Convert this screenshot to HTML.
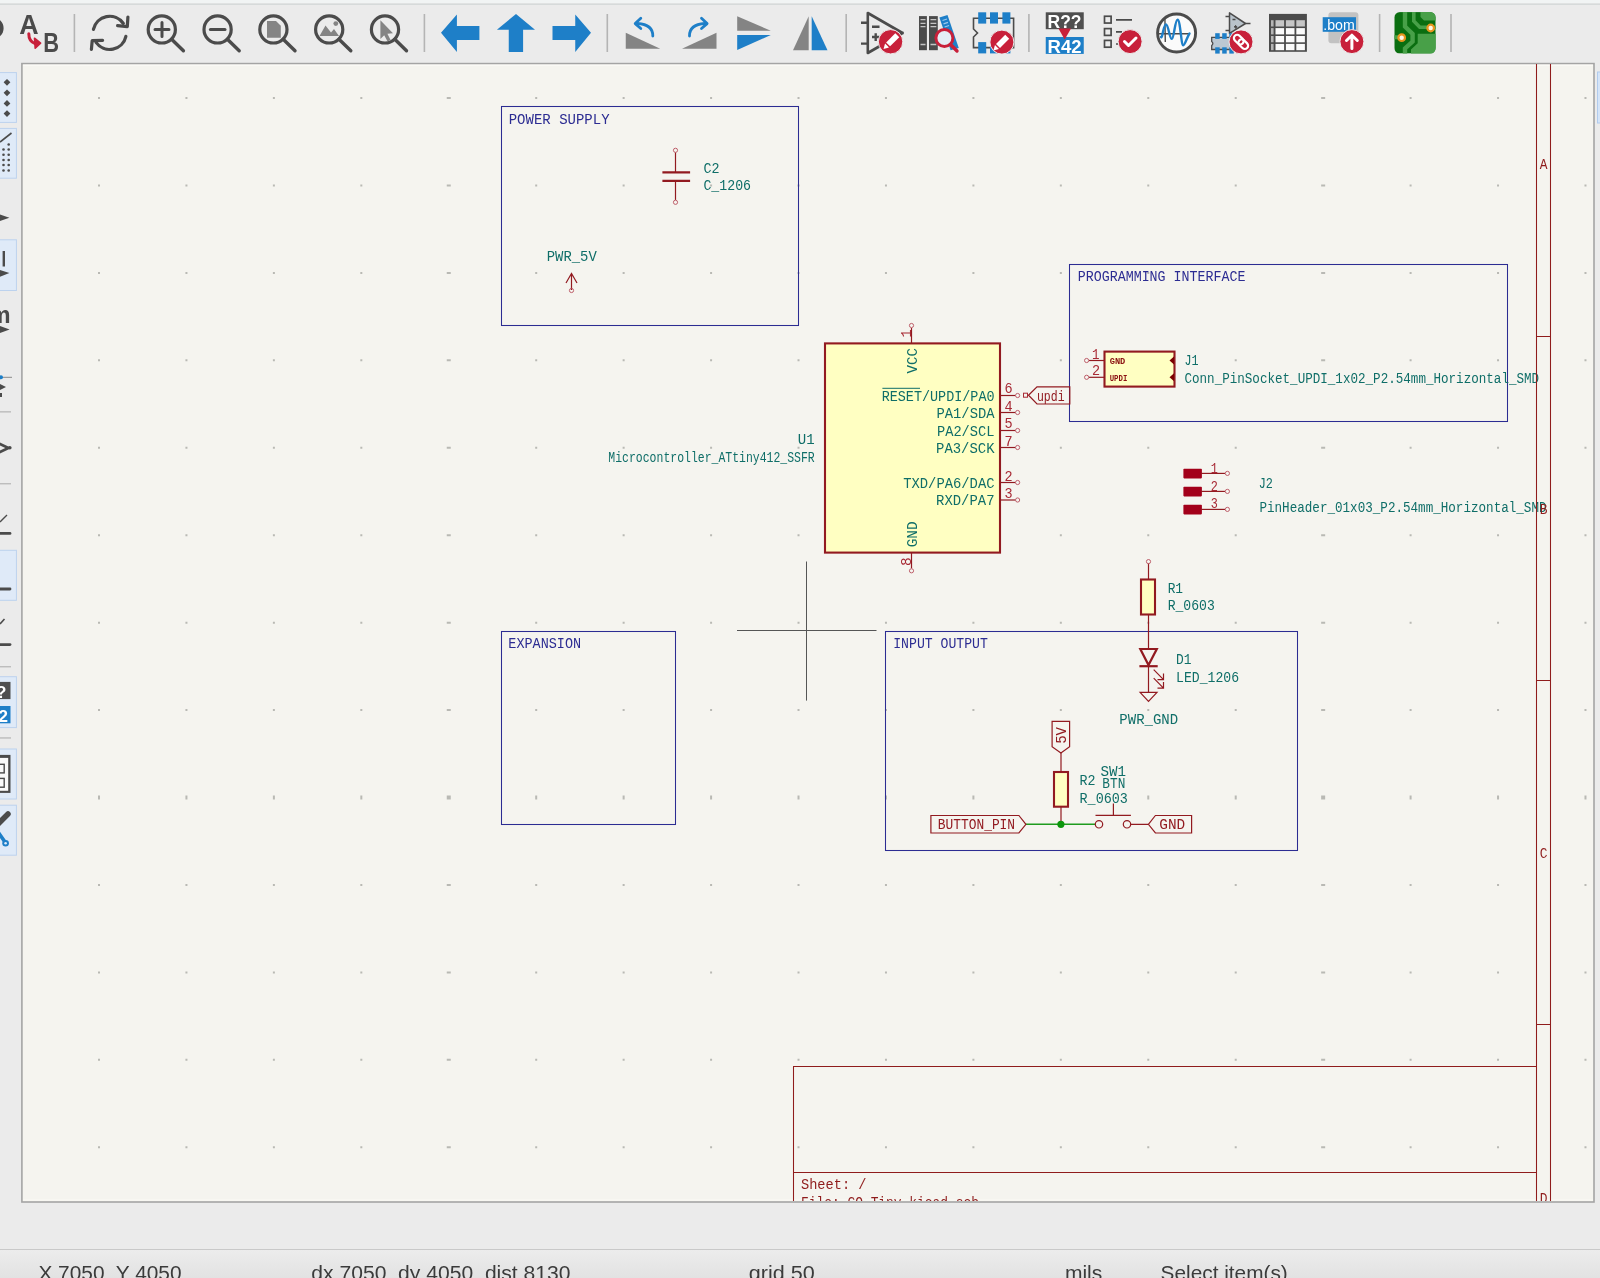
<!DOCTYPE html>
<html><head><meta charset="utf-8"><title>KiCad Schematic</title>
<style>
html,body{margin:0;padding:0;width:1600px;height:1278px;overflow:hidden;background:#ebebeb;}
svg{position:absolute;left:0;top:0;display:block;will-change:transform}
text{font-family:"Liberation Sans", sans-serif;}
.k{font-family:"Liberation Mono", monospace;stroke:none;}

</style></head><body>
<svg width="1600" height="1278" viewBox="0 0 1600 1278">

<rect x="0" y="0" width="1600" height="1278" fill="#ebebeb"/>
<rect x="0" y="0" width="1600" height="3.5" fill="#f1f4f4"/>
<rect x="0" y="3.5" width="1600" height="1.3" fill="#d2d6d6"/>
<rect x="0" y="1249" width="1600" height="1" fill="#c9c9c9"/>
<defs><linearGradient id="sb" x1="0" y1="0" x2="0" y2="1"><stop offset="0" stop-color="#ececec"/><stop offset="1" stop-color="#e2e2e2"/></linearGradient></defs>
<rect x="0" y="1250" width="1600" height="28" fill="url(#sb)"/>
<text x="38.4" y="1280.2" font-size="20.5" fill="#3b3b3b" textLength="143.2" lengthAdjust="spacingAndGlyphs" xml:space="preserve">X 7050  Y 4050</text>
<text x="311.3" y="1280.2" font-size="20.5" fill="#3b3b3b" textLength="259.2" lengthAdjust="spacingAndGlyphs" xml:space="preserve">dx 7050  dy 4050  dist 8130</text>
<text x="748.8" y="1280.2" font-size="20.5" fill="#3b3b3b" textLength="66.0" lengthAdjust="spacingAndGlyphs" xml:space="preserve">grid 50</text>
<text x="1064.9" y="1280.2" font-size="20.5" fill="#3b3b3b" textLength="37.4" lengthAdjust="spacingAndGlyphs" xml:space="preserve">mils</text>
<text x="1160.6" y="1280.2" font-size="20.5" fill="#3b3b3b" textLength="127.2" lengthAdjust="spacingAndGlyphs" xml:space="preserve">Select item(s)</text>
<rect x="21.9" y="63.6" width="1572.1" height="1138.4" fill="#f5f4ef" stroke="#a4a4a4" stroke-width="1.6"/>
<rect x="23" y="64.6" width="1570" height="1" fill="#fdfcf8"/>
<rect x="23" y="1199.5" width="1570" height="1" fill="#fbfaf6"/>
<clipPath id="cv"><rect x="22" y="64" width="1571" height="1137"/></clipPath>
<g clip-path="url(#cv)">
<path d="M98.00 97.00h2v2h-2z M98.00 184.44h2v2h-2z M98.00 271.88h2v2h-2z M98.00 359.32h2v2h-2z M98.00 446.76h2v2h-2z M98.00 534.20h2v2h-2z M98.00 621.64h2v2h-2z M98.00 709.08h2v2h-2z M98.00 795.52h2v4h-2z M98.00 883.96h2v2h-2z M98.00 971.40h2v2h-2z M98.00 1058.84h2v2h-2z M98.00 1146.28h2v2h-2z M185.44 97.00h2v2h-2z M185.44 184.44h2v2h-2z M185.44 271.88h2v2h-2z M185.44 359.32h2v2h-2z M185.44 446.76h2v2h-2z M185.44 534.20h2v2h-2z M185.44 621.64h2v2h-2z M185.44 709.08h2v2h-2z M185.44 795.52h2v4h-2z M185.44 883.96h2v2h-2z M185.44 971.40h2v2h-2z M185.44 1058.84h2v2h-2z M185.44 1146.28h2v2h-2z M272.88 97.00h2v2h-2z M272.88 184.44h2v2h-2z M272.88 271.88h2v2h-2z M272.88 359.32h2v2h-2z M272.88 446.76h2v2h-2z M272.88 534.20h2v2h-2z M272.88 621.64h2v2h-2z M272.88 709.08h2v2h-2z M272.88 795.52h2v4h-2z M272.88 883.96h2v2h-2z M272.88 971.40h2v2h-2z M272.88 1058.84h2v2h-2z M272.88 1146.28h2v2h-2z M360.32 97.00h2v2h-2z M360.32 184.44h2v2h-2z M360.32 271.88h2v2h-2z M360.32 359.32h2v2h-2z M360.32 446.76h2v2h-2z M360.32 534.20h2v2h-2z M360.32 621.64h2v2h-2z M360.32 709.08h2v2h-2z M360.32 795.52h2v4h-2z M360.32 883.96h2v2h-2z M360.32 971.40h2v2h-2z M360.32 1058.84h2v2h-2z M360.32 1146.28h2v2h-2z M446.76 97.00h4v2h-4z M446.76 184.44h4v2h-4z M446.76 271.88h4v2h-4z M446.76 359.32h4v2h-4z M446.76 446.76h4v2h-4z M446.76 534.20h4v2h-4z M446.76 621.64h4v2h-4z M446.76 709.08h4v2h-4z M446.76 795.52h4v4h-4z M446.76 883.96h4v2h-4z M446.76 971.40h4v2h-4z M446.76 1058.84h4v2h-4z M446.76 1146.28h4v2h-4z M535.20 97.00h2v2h-2z M535.20 184.44h2v2h-2z M535.20 271.88h2v2h-2z M535.20 359.32h2v2h-2z M535.20 446.76h2v2h-2z M535.20 534.20h2v2h-2z M535.20 621.64h2v2h-2z M535.20 709.08h2v2h-2z M535.20 795.52h2v4h-2z M535.20 883.96h2v2h-2z M535.20 971.40h2v2h-2z M535.20 1058.84h2v2h-2z M535.20 1146.28h2v2h-2z M622.64 97.00h2v2h-2z M622.64 184.44h2v2h-2z M622.64 271.88h2v2h-2z M622.64 359.32h2v2h-2z M622.64 446.76h2v2h-2z M622.64 534.20h2v2h-2z M622.64 621.64h2v2h-2z M622.64 709.08h2v2h-2z M622.64 795.52h2v4h-2z M622.64 883.96h2v2h-2z M622.64 971.40h2v2h-2z M622.64 1058.84h2v2h-2z M622.64 1146.28h2v2h-2z M710.08 97.00h2v2h-2z M710.08 184.44h2v2h-2z M710.08 271.88h2v2h-2z M710.08 359.32h2v2h-2z M710.08 446.76h2v2h-2z M710.08 534.20h2v2h-2z M710.08 621.64h2v2h-2z M710.08 709.08h2v2h-2z M710.08 795.52h2v4h-2z M710.08 883.96h2v2h-2z M710.08 971.40h2v2h-2z M710.08 1058.84h2v2h-2z M710.08 1146.28h2v2h-2z M797.52 97.00h2v2h-2z M797.52 184.44h2v2h-2z M797.52 271.88h2v2h-2z M797.52 359.32h2v2h-2z M797.52 446.76h2v2h-2z M797.52 534.20h2v2h-2z M797.52 621.64h2v2h-2z M797.52 709.08h2v2h-2z M797.52 795.52h2v4h-2z M797.52 883.96h2v2h-2z M797.52 971.40h2v2h-2z M797.52 1058.84h2v2h-2z M797.52 1146.28h2v2h-2z M884.96 97.00h2v2h-2z M884.96 184.44h2v2h-2z M884.96 271.88h2v2h-2z M884.96 359.32h2v2h-2z M884.96 446.76h2v2h-2z M884.96 534.20h2v2h-2z M884.96 621.64h2v2h-2z M884.96 709.08h2v2h-2z M884.96 795.52h2v4h-2z M884.96 883.96h2v2h-2z M884.96 971.40h2v2h-2z M884.96 1058.84h2v2h-2z M884.96 1146.28h2v2h-2z M972.40 97.00h2v2h-2z M972.40 184.44h2v2h-2z M972.40 271.88h2v2h-2z M972.40 359.32h2v2h-2z M972.40 446.76h2v2h-2z M972.40 534.20h2v2h-2z M972.40 621.64h2v2h-2z M972.40 709.08h2v2h-2z M972.40 795.52h2v4h-2z M972.40 883.96h2v2h-2z M972.40 971.40h2v2h-2z M972.40 1058.84h2v2h-2z M972.40 1146.28h2v2h-2z M1059.84 97.00h2v2h-2z M1059.84 184.44h2v2h-2z M1059.84 271.88h2v2h-2z M1059.84 359.32h2v2h-2z M1059.84 446.76h2v2h-2z M1059.84 534.20h2v2h-2z M1059.84 621.64h2v2h-2z M1059.84 709.08h2v2h-2z M1059.84 795.52h2v4h-2z M1059.84 883.96h2v2h-2z M1059.84 971.40h2v2h-2z M1059.84 1058.84h2v2h-2z M1059.84 1146.28h2v2h-2z M1147.28 97.00h2v2h-2z M1147.28 184.44h2v2h-2z M1147.28 271.88h2v2h-2z M1147.28 359.32h2v2h-2z M1147.28 446.76h2v2h-2z M1147.28 534.20h2v2h-2z M1147.28 621.64h2v2h-2z M1147.28 709.08h2v2h-2z M1147.28 795.52h2v4h-2z M1147.28 883.96h2v2h-2z M1147.28 971.40h2v2h-2z M1147.28 1058.84h2v2h-2z M1147.28 1146.28h2v2h-2z M1234.72 97.00h2v2h-2z M1234.72 184.44h2v2h-2z M1234.72 271.88h2v2h-2z M1234.72 359.32h2v2h-2z M1234.72 446.76h2v2h-2z M1234.72 534.20h2v2h-2z M1234.72 621.64h2v2h-2z M1234.72 709.08h2v2h-2z M1234.72 795.52h2v4h-2z M1234.72 883.96h2v2h-2z M1234.72 971.40h2v2h-2z M1234.72 1058.84h2v2h-2z M1234.72 1146.28h2v2h-2z M1321.16 97.00h4v2h-4z M1321.16 184.44h4v2h-4z M1321.16 271.88h4v2h-4z M1321.16 359.32h4v2h-4z M1321.16 446.76h4v2h-4z M1321.16 534.20h4v2h-4z M1321.16 621.64h4v2h-4z M1321.16 709.08h4v2h-4z M1321.16 795.52h4v4h-4z M1321.16 883.96h4v2h-4z M1321.16 971.40h4v2h-4z M1321.16 1058.84h4v2h-4z M1321.16 1146.28h4v2h-4z M1409.60 97.00h2v2h-2z M1409.60 184.44h2v2h-2z M1409.60 271.88h2v2h-2z M1409.60 359.32h2v2h-2z M1409.60 446.76h2v2h-2z M1409.60 534.20h2v2h-2z M1409.60 621.64h2v2h-2z M1409.60 709.08h2v2h-2z M1409.60 795.52h2v4h-2z M1409.60 883.96h2v2h-2z M1409.60 971.40h2v2h-2z M1409.60 1058.84h2v2h-2z M1409.60 1146.28h2v2h-2z M1497.04 97.00h2v2h-2z M1497.04 184.44h2v2h-2z M1497.04 271.88h2v2h-2z M1497.04 359.32h2v2h-2z M1497.04 446.76h2v2h-2z M1497.04 534.20h2v2h-2z M1497.04 621.64h2v2h-2z M1497.04 709.08h2v2h-2z M1497.04 795.52h2v4h-2z M1497.04 883.96h2v2h-2z M1497.04 971.40h2v2h-2z M1497.04 1058.84h2v2h-2z M1497.04 1146.28h2v2h-2z M1584.48 97.00h2v2h-2z M1584.48 184.44h2v2h-2z M1584.48 271.88h2v2h-2z M1584.48 359.32h2v2h-2z M1584.48 446.76h2v2h-2z M1584.48 534.20h2v2h-2z M1584.48 621.64h2v2h-2z M1584.48 709.08h2v2h-2z M1584.48 795.52h2v4h-2z M1584.48 883.96h2v2h-2z M1584.48 971.40h2v2h-2z M1584.48 1058.84h2v2h-2z M1584.48 1146.28h2v2h-2z" fill="#b9b9b4"/>
<rect x="501.5" y="106.5" width="297.0" height="219.0" fill="none" stroke="#2c2c92" stroke-width="1.05"/>
<text class="k" x="508.72" y="123.50" font-size="14.4" fill="#2c2c92" textLength="100.85" lengthAdjust="spacingAndGlyphs" >POWER SUPPLY</text>
<rect x="1069.5" y="264.5" width="438.0" height="157.0" fill="none" stroke="#2c2c92" stroke-width="1.05"/>
<text class="k" x="1077.82" y="280.50" font-size="14.4" fill="#2c2c92" textLength="167.55" lengthAdjust="spacingAndGlyphs" >PROGRAMMING INTERFACE</text>
<rect x="501.5" y="631.5" width="174.0" height="193.0" fill="none" stroke="#2c2c92" stroke-width="1.05"/>
<text class="k" x="508.32" y="648.20" font-size="14.4" fill="#2c2c92" textLength="72.75" lengthAdjust="spacingAndGlyphs" >EXPANSION</text>
<rect x="885.5" y="631.5" width="412.0" height="219.0" fill="none" stroke="#2c2c92" stroke-width="1.05"/>
<text class="k" x="893.22" y="648.20" font-size="14.4" fill="#2c2c92" textLength="94.65" lengthAdjust="spacingAndGlyphs" >INPUT OUTPUT</text>
<path d="M737 630.5H876.5M806.5 561.5V700.6" stroke="#555" stroke-width="1" fill="none"/>
<path d="M675.5 152.5V172.3M675.5 180.9V200" stroke="#921a20" stroke-width="1.2" fill="none"/>
<path d="M662.4 172.3H690.1M662.4 180.9H690.1" stroke="#921a20" stroke-width="2.2" fill="none"/>
<circle cx="675.5" cy="150.3" r="2.1" fill="none" stroke="#b8505e" stroke-width="0.9"/>
<circle cx="675.5" cy="202.3" r="2.1" fill="none" stroke="#b8505e" stroke-width="0.9"/>
<text class="k" x="703.45" y="173.20" font-size="13.8" fill="#0f6e68" textLength="16.10" lengthAdjust="spacingAndGlyphs" >C2</text>
<text class="k" x="703.45" y="190.10" font-size="13.8" fill="#0f6e68" textLength="47.60" lengthAdjust="spacingAndGlyphs" >C_1206</text>
<text class="k" x="546.75" y="260.80" font-size="13.8" fill="#0f6e68" textLength="50.00" lengthAdjust="spacingAndGlyphs" >PWR_5V</text>
<path d="M571.5 290V273.5M566 283L571.5 273.5L577 283" stroke="#921a20" stroke-width="1.2" fill="none"/>
<circle cx="571.5" cy="290.5" r="2.1" fill="none" stroke="#b8505e" stroke-width="0.9"/>
<rect x="825" y="343.4" width="175" height="209.2" fill="#ffffc2" stroke="#921a20" stroke-width="2.1"/>
<path d="M911.5 328V343" stroke="#921a20" stroke-width="1.2"/>
<circle cx="911.5" cy="325.5" r="2.1" fill="none" stroke="#b8505e" stroke-width="0.9"/>
<path d="M911.5 553V568.3" stroke="#921a20" stroke-width="1.2"/>
<circle cx="911.5" cy="570.8" r="2.1" fill="none" stroke="#b8505e" stroke-width="0.9"/>
<text class="k" x="0" y="0" font-size="13.8" fill="#a82a35" textLength="8.10" lengthAdjust="spacingAndGlyphs" transform="translate(911.20 337.55) rotate(-90)">1</text>
<text class="k ky" x="0" y="0" font-size="13.8" fill="#0f6e68" textLength="25.40" lengthAdjust="spacingAndGlyphs" transform="translate(917.00 373.55) rotate(-90)">VCC</text>
<text class="k ky" x="0" y="0" font-size="13.8" fill="#0f6e68" textLength="25.90" lengthAdjust="spacingAndGlyphs" transform="translate(917.00 547.35) rotate(-90)">GND</text>
<text class="k" x="0" y="0" font-size="13.8" fill="#a82a35" textLength="8.70" lengthAdjust="spacingAndGlyphs" transform="translate(911.20 565.95) rotate(-90)">8</text>
<path d="M1000 395.5H1015.3" stroke="#921a20" stroke-width="1.2"/>
<circle cx="1017.6" cy="395.5" r="2.1" fill="none" stroke="#b8505e" stroke-width="0.9"/>
<text class="k ky" x="881.65" y="400.50" font-size="13.8" fill="#0f6e68" textLength="112.90" lengthAdjust="spacingAndGlyphs" >RESET/UPDI/PA0</text>
<text class="k" x="1004.45" y="393.20" font-size="13.8" fill="#a82a35" textLength="8.10" lengthAdjust="spacingAndGlyphs" >6</text>
<path d="M1000 412.5H1015.3" stroke="#921a20" stroke-width="1.2"/>
<circle cx="1017.6" cy="412.5" r="2.1" fill="none" stroke="#b8505e" stroke-width="0.9"/>
<text class="k ky" x="936.45" y="418.00" font-size="13.8" fill="#0f6e68" textLength="58.10" lengthAdjust="spacingAndGlyphs" >PA1/SDA</text>
<text class="k" x="1004.45" y="410.70" font-size="13.8" fill="#a82a35" textLength="8.10" lengthAdjust="spacingAndGlyphs" >4</text>
<path d="M1000 430.5H1015.3" stroke="#921a20" stroke-width="1.2"/>
<circle cx="1017.6" cy="430.5" r="2.1" fill="none" stroke="#b8505e" stroke-width="0.9"/>
<text class="k ky" x="936.95" y="435.50" font-size="13.8" fill="#0f6e68" textLength="57.60" lengthAdjust="spacingAndGlyphs" >PA2/SCL</text>
<text class="k" x="1004.45" y="428.20" font-size="13.8" fill="#a82a35" textLength="8.10" lengthAdjust="spacingAndGlyphs" >5</text>
<path d="M1000 447.5H1015.3" stroke="#921a20" stroke-width="1.2"/>
<circle cx="1017.6" cy="447.5" r="2.1" fill="none" stroke="#b8505e" stroke-width="0.9"/>
<text class="k ky" x="936.05" y="453.00" font-size="13.8" fill="#0f6e68" textLength="58.50" lengthAdjust="spacingAndGlyphs" >PA3/SCK</text>
<text class="k" x="1004.45" y="445.70" font-size="13.8" fill="#a82a35" textLength="8.10" lengthAdjust="spacingAndGlyphs" >7</text>
<path d="M1000 482.5H1015.3" stroke="#921a20" stroke-width="1.2"/>
<circle cx="1017.6" cy="482.5" r="2.1" fill="none" stroke="#b8505e" stroke-width="0.9"/>
<text class="k ky" x="903.15" y="487.80" font-size="13.8" fill="#0f6e68" textLength="91.40" lengthAdjust="spacingAndGlyphs" >TXD/PA6/DAC</text>
<text class="k" x="1004.45" y="480.50" font-size="13.8" fill="#a82a35" textLength="8.10" lengthAdjust="spacingAndGlyphs" >2</text>
<path d="M1000 500.0H1015.3" stroke="#921a20" stroke-width="1.2"/>
<circle cx="1017.6" cy="500.0" r="2.1" fill="none" stroke="#b8505e" stroke-width="0.9"/>
<text class="k ky" x="936.05" y="505.30" font-size="13.8" fill="#0f6e68" textLength="58.50" lengthAdjust="spacingAndGlyphs" >RXD/PA7</text>
<text class="k" x="1004.45" y="498.00" font-size="13.8" fill="#a82a35" textLength="8.10" lengthAdjust="spacingAndGlyphs" >3</text>
<path d="M882.4 388.3H920" stroke="#0f6e68" stroke-width="1"/>
<text class="k" x="797.85" y="444.30" font-size="13.8" fill="#0f6e68" textLength="16.90" lengthAdjust="spacingAndGlyphs" >U1</text>
<text class="k" x="608.35" y="461.60" font-size="13.8" fill="#0f6e68" textLength="206.40" lengthAdjust="spacingAndGlyphs" >Microcontroller_ATtiny412_SSFR</text>
<path d="M1028.5 395.2L1037 386.8H1069.8V404H1037Z" fill="none" stroke="#921a20" stroke-width="1.2"/>
<rect x="1023.5" y="393.2" width="4" height="4" fill="none" stroke="#a82a35" stroke-width="1"/>
<text class="k" x="1036.95" y="401.10" font-size="13.8" fill="#921a20" textLength="27.60" lengthAdjust="spacingAndGlyphs" >updi</text>
<rect x="1104.5" y="351.6" width="70" height="35" fill="#ffffc2" stroke="#921a20" stroke-width="2.1"/>
<path d="M1089 360.5H1104" stroke="#921a20" stroke-width="1.2"/>
<circle cx="1086.6" cy="360.5" r="2.1" fill="none" stroke="#b8505e" stroke-width="0.9"/>
<path d="M1174 356.5L1169.5 360.5L1174 364.5Z" fill="#7a0000"/>
<path d="M1089 377.3H1104" stroke="#921a20" stroke-width="1.2"/>
<circle cx="1086.6" cy="377.3" r="2.1" fill="none" stroke="#b8505e" stroke-width="0.9"/>
<path d="M1174 373.3L1169.5 377.3L1174 381.3Z" fill="#7a0000"/>
<text class="k" x="1092.05" y="358.60" font-size="13.8" fill="#a82a35" textLength="7.50" lengthAdjust="spacingAndGlyphs" >1</text>
<text class="k" x="1092.05" y="375.10" font-size="13.8" fill="#a82a35" textLength="8.10" lengthAdjust="spacingAndGlyphs" >2</text>
<text class="k" x="1109.66" y="364.40" font-size="8.5" fill="#8a1010" textLength="15.68" lengthAdjust="spacingAndGlyphs" font-weight="bold">GND</text>
<text class="k" x="1109.66" y="381.20" font-size="8.5" fill="#8a1010" textLength="17.68" lengthAdjust="spacingAndGlyphs" font-weight="bold">UPDI</text>
<text class="k" x="1184.45" y="365.30" font-size="13.8" fill="#0f6e68" textLength="14.10" lengthAdjust="spacingAndGlyphs" >J1</text>
<text class="k" x="1184.45" y="383.30" font-size="13.8" fill="#0f6e68" textLength="354.70" lengthAdjust="spacingAndGlyphs" >Conn_PinSocket_UPDI_1x02_P2.54mm_Horizontal_SMD</text>
<rect x="1183.4" y="468.79999999999995" width="18.5" height="9.6" rx="0.8" fill="#a3001a"/>
<path d="M1201 473.4H1225" stroke="#921a20" stroke-width="1.2"/>
<circle cx="1227.4" cy="473.4" r="2.1" fill="none" stroke="#b8505e" stroke-width="0.9"/>
<text class="k" x="1210.65" y="473.20" font-size="13.8" fill="#a82a35" textLength="7.10" lengthAdjust="spacingAndGlyphs" >1</text>
<rect x="1183.4" y="486.79999999999995" width="18.5" height="9.6" rx="0.8" fill="#a3001a"/>
<path d="M1201 491.4H1225" stroke="#921a20" stroke-width="1.2"/>
<circle cx="1227.4" cy="491.4" r="2.1" fill="none" stroke="#b8505e" stroke-width="0.9"/>
<text class="k" x="1210.65" y="490.60" font-size="13.8" fill="#a82a35" textLength="7.10" lengthAdjust="spacingAndGlyphs" >2</text>
<rect x="1183.4" y="504.79999999999995" width="18.5" height="9.6" rx="0.8" fill="#a3001a"/>
<path d="M1201 509.4H1225" stroke="#921a20" stroke-width="1.2"/>
<circle cx="1227.4" cy="509.4" r="2.1" fill="none" stroke="#b8505e" stroke-width="0.9"/>
<text class="k" x="1210.65" y="507.60" font-size="13.8" fill="#a82a35" textLength="7.10" lengthAdjust="spacingAndGlyphs" >3</text>
<text class="k" x="1258.75" y="487.90" font-size="13.8" fill="#0f6e68" textLength="14.20" lengthAdjust="spacingAndGlyphs" >J2</text>
<text class="k" x="1259.45" y="512.20" font-size="13.8" fill="#0f6e68" textLength="287.10" lengthAdjust="spacingAndGlyphs" >PinHeader_01x03_P2.54mm_Horizontal_SMD</text>
<path d="M1148.5 563.5V579.3M1148.5 614.5V649M1148.5 666V692.3" stroke="#921a20" stroke-width="1.2" fill="none"/>
<circle cx="1148.5" cy="561.6" r="2.1" fill="none" stroke="#b8505e" stroke-width="0.9"/>
<rect x="1141" y="579.5" width="14" height="35" fill="#ffffc2" stroke="#921a20" stroke-width="2.1"/>
<path d="M1140.3 649H1156.8L1148.5 665Z" fill="none" stroke="#921a20" stroke-width="2.2" stroke-linejoin="miter"/>
<path d="M1139.4 666.2H1157.7" stroke="#921a20" stroke-width="2.2"/>
<path d="M1153.7 669.7L1163.5 679.6M1163.5 673.5V679.6H1157.5M1153.7 678.2L1163.5 688.2M1163.5 682V688.2H1157.5" stroke="#921a20" stroke-width="1.2" fill="none"/>
<path d="M1140.1 692.3H1157L1148.5 701.4Z" fill="none" stroke="#921a20" stroke-width="1.2"/>
<text class="k" x="1167.65" y="592.60" font-size="13.8" fill="#0f6e68" textLength="15.40" lengthAdjust="spacingAndGlyphs" >R1</text>
<text class="k" x="1167.65" y="609.80" font-size="13.8" fill="#0f6e68" textLength="47.10" lengthAdjust="spacingAndGlyphs" >R_0603</text>
<text class="k" x="1176.05" y="664.40" font-size="13.8" fill="#0f6e68" textLength="15.50" lengthAdjust="spacingAndGlyphs" >D1</text>
<text class="k" x="1176.05" y="682.30" font-size="13.8" fill="#0f6e68" textLength="63.00" lengthAdjust="spacingAndGlyphs" >LED_1206</text>
<text class="k" x="1119.35" y="723.80" font-size="13.8" fill="#0f6e68" textLength="58.80" lengthAdjust="spacingAndGlyphs" >PWR_GND</text>
<path d="M1052.1 721.4H1069.6V746.8L1060.9 752.9L1052.1 746.8Z" fill="none" stroke="#921a20" stroke-width="1.2"/>
<text class="k" x="0" y="0" font-size="13.8" fill="#921a20" textLength="16.90" lengthAdjust="spacingAndGlyphs" transform="translate(1066.00 743.85) rotate(-90)">5V</text>
<path d="M1061 753V771.6M1061 806.6V824" stroke="#921a20" stroke-width="1.2" fill="none"/>
<rect x="1054" y="772" width="14" height="34.7" fill="#ffffc2" stroke="#921a20" stroke-width="2.1"/>
<path d="M1025.9 824.3H1095.2" stroke="#1f9b1f" stroke-width="1.4"/>
<circle cx="1060.9" cy="824.3" r="3.6" fill="#0c960c"/>
<path d="M930.9 815.5H1018.9L1025.9 824.3L1018.9 833H930.9Z" fill="none" stroke="#921a20" stroke-width="1.2"/>
<text class="k" x="937.85" y="829.30" font-size="13.8" fill="#921a20" textLength="77.20" lengthAdjust="spacingAndGlyphs" >BUTTON_PIN</text>
<circle cx="1099" cy="824.3" r="3.7" fill="none" stroke="#921a20" stroke-width="1.2"/>
<circle cx="1127" cy="824.3" r="3.7" fill="none" stroke="#921a20" stroke-width="1.2"/>
<path d="M1095.5 815.4H1130.9M1113.4 803.6V815.4M1130.8 824.3H1148.4" stroke="#921a20" stroke-width="1.2" fill="none"/>
<path d="M1148.4 824.3L1155.4 815.5H1191.6V833H1155.4Z" fill="none" stroke="#921a20" stroke-width="1.2"/>
<text class="k" x="1159.25" y="829.30" font-size="13.8" fill="#921a20" textLength="25.90" lengthAdjust="spacingAndGlyphs" >GND</text>
<text class="k" x="1100.55" y="775.70" font-size="13.8" fill="#0f6e68" textLength="25.60" lengthAdjust="spacingAndGlyphs" >SW1</text>
<text class="k" x="1102.35" y="788.00" font-size="13.8" fill="#0f6e68" textLength="23.00" lengthAdjust="spacingAndGlyphs" >BTN</text>
<text class="k" x="1079.55" y="785.00" font-size="13.8" fill="#0f6e68" textLength="16.00" lengthAdjust="spacingAndGlyphs" >R2</text>
<text class="k" x="1079.55" y="802.50" font-size="13.8" fill="#0f6e68" textLength="48.40" lengthAdjust="spacingAndGlyphs" >R_0603</text>
<path d="M1536.5 63V1202M1550.5 63V1202M1536.5 336.5H1550.5M1536.5 680.5H1550.5M1536.5 1024.5H1550.5M793.5 1202V1066.5H1536.5M793.5 1172.5H1536.5" stroke="#8f1c1c" stroke-width="1.05" fill="none"/>
<text class="k" x="1539.82" y="169.10" font-size="14.4" fill="#8f1c1c" textLength="7.75" lengthAdjust="spacingAndGlyphs" >A</text>
<text class="k" x="1539.82" y="513.60" font-size="14.4" fill="#8f1c1c" textLength="7.75" lengthAdjust="spacingAndGlyphs" >B</text>
<text class="k" x="1539.82" y="858.10" font-size="14.4" fill="#8f1c1c" textLength="7.75" lengthAdjust="spacingAndGlyphs" >C</text>
<text class="k" x="1539.82" y="1202.60" font-size="14.4" fill="#8f1c1c" textLength="7.75" lengthAdjust="spacingAndGlyphs" >D</text>
<text class="k" x="800.95" y="1189.20" font-size="13.8" fill="#8f1c1c" textLength="65.60" lengthAdjust="spacingAndGlyphs" >Sheet: /</text>
<text class="k" x="800.95" y="1206.90" font-size="13.8" fill="#8f1c1c" textLength="178.10" lengthAdjust="spacingAndGlyphs" >File: CO_Tiny.kicad_sch</text>
</g>
<rect x="73.6" y="14" width="1.6" height="38" fill="#b4b4b4"/>
<rect x="423.6" y="14" width="1.6" height="38" fill="#b4b4b4"/>
<rect x="606.5" y="14" width="1.6" height="38" fill="#b4b4b4"/>
<rect x="845.4" y="14" width="1.6" height="38" fill="#b4b4b4"/>
<rect x="1028.1" y="14" width="1.6" height="38" fill="#b4b4b4"/>
<rect x="1378.8" y="14" width="1.6" height="38" fill="#b4b4b4"/>
<rect x="1450.2" y="14" width="1.6" height="38" fill="#b4b4b4"/>
<path d="M-7.2 19.2A9 9 0 0 1 -7.2 37.2" stroke="#4b4b4b" stroke-width="3.6" fill="none"/>
<text x="19.3" y="34" font-size="27" font-weight="bold" fill="#4b4b4b" textLength="19.4" lengthAdjust="spacingAndGlyphs">A</text>
<text x="43.3" y="52" font-size="27" font-weight="bold" fill="#4b4b4b" textLength="15.8" lengthAdjust="spacingAndGlyphs">B</text>
<path d="M28.8 33.8Q28.8 41.5 35 43.5" stroke="#c8203a" stroke-width="3" fill="none" stroke-linecap="round"/>
<path d="M34.5 38.2L40.6 43.2L35.2 48.2Z" fill="#c8203a" stroke="#c8203a" stroke-width="1.6" stroke-linejoin="round"/>
<path d="M93.41 29.45A16.6 16.6 0 0 1 123.33 23.5" stroke="#4b4b4b" stroke-width="3.2" fill="none" stroke-linecap="round"/>
<path d="M117.6 25.6L127.3 26.6L127.9 17" stroke="#4b4b4b" stroke-width="3.2" fill="none" stroke-linecap="round" stroke-linejoin="round"/>
<path d="M125.9 36.35A16.6 16.6 0 0 1 96.05 42.4" stroke="#4b4b4b" stroke-width="3.2" fill="none" stroke-linecap="round"/>
<path d="M102.6 40.4L92.2 40.6L91.4 49.4" stroke="#4b4b4b" stroke-width="3.2" fill="none" stroke-linecap="round" stroke-linejoin="round"/>
<circle cx="161.8" cy="29.4" r="13.6" stroke="#4b4b4b" stroke-width="3.2" fill="none"/>
<path d="M171.6 39.2L183.4 50.7" stroke="#4b4b4b" stroke-width="3.4" stroke-linecap="round"/>
<path d="M155 29.6H169M162 22.6V36.4" stroke="#4b4b4b" stroke-width="3" stroke-linecap="round"/>
<circle cx="217.6" cy="29.4" r="13.6" stroke="#4b4b4b" stroke-width="3.2" fill="none"/>
<path d="M227.4 39.2L239.2 50.7" stroke="#4b4b4b" stroke-width="3.4" stroke-linecap="round"/>
<path d="M210.4 29.6H225" stroke="#4b4b4b" stroke-width="3" stroke-linecap="round"/>
<circle cx="273.4" cy="29.4" r="13.6" stroke="#4b4b4b" stroke-width="3.2" fill="none"/>
<path d="M283.2 39.2L295.0 50.7" stroke="#4b4b4b" stroke-width="3.4" stroke-linecap="round"/>
<path d="M267 21H276L280.8 25.8V37.7H267Z" fill="#848484"/>
<circle cx="329.2" cy="29.4" r="13.6" stroke="#4b4b4b" stroke-width="3.2" fill="none"/>
<path d="M339.0 39.2L350.8 50.7" stroke="#4b4b4b" stroke-width="3.4" stroke-linecap="round"/>
<path d="M319.5 36L325.5 25.5L331 32.5L334 29L339 36Z" fill="#848484"/><circle cx="335.8" cy="23.6" r="2.4" fill="#848484"/>
<circle cx="385" cy="29.4" r="13.6" stroke="#4b4b4b" stroke-width="3.2" fill="none"/>
<path d="M394.8 39.2L406.5 50.7" stroke="#4b4b4b" stroke-width="3.4" stroke-linecap="round"/>
<path d="M380.4 20.2V39L384.2 35.2L387.6 41.5L390.6 40L387.4 33.8L393 33.2Z" fill="#848484"/>
<path d="M441 32.75L456.9 14.4V26H479.4V40H456.9V51.9Z" fill="#1e7fc8"/>
<path d="M516 14L535 29.75H523.1V51.9H508.75V29.75H496.9Z" fill="#1e7fc8"/>
<path d="M591 32.75L575.25 14.4V26H552.5V40H575.25V51.9Z" fill="#1e7fc8"/>
<path d="M625.75 32.75V48.8H660.25Z" fill="#848484"/>
<path d="M652.8 36Q653 24.5 637.5 23.5" stroke="#1e7fc8" stroke-width="2.8" fill="none" stroke-linecap="round"/>
<path d="M640.8 18.3L635.2 23.6L640.8 28.5" stroke="#1e7fc8" stroke-width="2.8" fill="none" stroke-linecap="round" stroke-linejoin="round"/>
<path d="M682 48.8H716.5V32.75Z" fill="#848484"/>
<path d="M689.5 36Q689.3 24.5 704.8 23.5" stroke="#1e7fc8" stroke-width="2.8" fill="none" stroke-linecap="round"/>
<path d="M701.5 18.3L707.1 23.6L701.5 28.5" stroke="#1e7fc8" stroke-width="2.8" fill="none" stroke-linecap="round" stroke-linejoin="round"/>
<path d="M737.2 16.25V30.8H770.8Z" fill="#848484"/><path d="M737.2 35H770.8L737.2 50Z" fill="#1e7fc8"/>
<path d="M808.7 16.25V50.3H793Z" fill="#848484"/><path d="M811.7 16.25V50.3H827.5Z" fill="#1e7fc8"/>
<path d="M867.8 13V53L902.5 33Z" stroke="#4b4b4b" stroke-width="2.6" fill="none" stroke-linejoin="round"/>
<path d="M861 22.7H868M861 43.6H868M902.5 33H903.5M872 26.75H879.5M872 37H879.5M875.7 33.2V41" stroke="#4b4b4b" stroke-width="2.4" fill="none"/>
<circle cx="890.6" cy="41.75" r="12.2" fill="#c8203a" stroke="#ececec" stroke-width="1"/>
<g transform="rotate(-45 892 40.5)"><rect x="886.5" y="37.7" width="13" height="5.6" fill="#fff"/><path d="M885.0 37.7L880.0 40.5L885.0 43.3Z" fill="#fff"/></g>
<rect x="919" y="16.1" width="7.9" height="34.1" fill="#4b4b4b"/><rect x="929" y="16.1" width="8.8" height="34.1" fill="#4b4b4b"/>
<path d="M920.5 19.6H925.5M920.5 23.3H925.5M920.5 26.6H925.5M930.5 19.6H936.3M930.5 23.3H936.3M930.5 26.6H936.3M920.5 44.5H925.5M930.5 44.5H936.3" stroke="#c4c4c4" stroke-width="1.3"/>
<path d="M939.4 17.4L947.5 14.9L958.75 48L950.6 50.2Z" fill="#1e7fc8"/>
<path d="M942.5 20.5L947 19M943.5 23.8L948 22.3M944.6 27L949.1 25.5" stroke="#9cc8ec" stroke-width="1.3"/>
<circle cx="944.4" cy="38" r="8.5" fill="#e4eef5" stroke="#c8203a" stroke-width="3"/>
<path d="M950.5 44.5L957 51" stroke="#c8203a" stroke-width="3.4" stroke-linecap="round"/>
<path d="M973.5 18.2H1013.6V47.6H973.5V37L977.5 33L973.5 29Z" stroke="#4b4b4b" stroke-width="1.6" fill="none"/>
<rect x="978.2" y="12.3" width="8" height="11.3" fill="#1e7fc8"/>
<rect x="978.2" y="42.1" width="8" height="11.3" fill="#1e7fc8"/>
<rect x="990" y="12.3" width="8" height="11.3" fill="#1e7fc8"/>
<rect x="990" y="42.1" width="8" height="11.3" fill="#1e7fc8"/>
<rect x="1002.4" y="12.3" width="8" height="11.3" fill="#1e7fc8"/>
<rect x="1002.4" y="42.1" width="8" height="11.3" fill="#1e7fc8"/>
<circle cx="1001.9" cy="42.1" r="12" fill="#c8203a" stroke="#ececec" stroke-width="1"/>
<g transform="rotate(-45 1001.9 42.1)"><rect x="996.4" y="39.3" width="13" height="5.6" fill="#fff"/><path d="M994.9 39.3L989.9 42.1L994.9 44.9Z" fill="#fff"/></g>
<rect x="1045.75" y="12.3" width="38" height="16.9" fill="#4f4f4f"/>
<text x="1047.5" y="27.8" font-size="18" font-weight="bold" fill="#fff" textLength="34" lengthAdjust="spacingAndGlyphs">R??</text>
<rect x="1045.75" y="37" width="38" height="16.9" fill="#1e7fc8"/>
<text x="1047.5" y="52.5" font-size="18" font-weight="bold" fill="#fff" textLength="34" lengthAdjust="spacingAndGlyphs">R42</text>
<path d="M1058.5 28.5H1071L1064.7 39.5Z" fill="#c8203a"/>
<rect x="1104.5" y="16.25" width="6.6" height="6.8" fill="none" stroke="#4b4b4b" stroke-width="1.7"/>
<rect x="1104.5" y="28.6" width="6.6" height="6.8" fill="none" stroke="#4b4b4b" stroke-width="1.7"/>
<rect x="1104.5" y="40.4" width="6.6" height="6.8" fill="none" stroke="#4b4b4b" stroke-width="1.7"/>
<path d="M1116 19.8H1132M1116 31.8H1122M1116 44H1119" stroke="#4b4b4b" stroke-width="1.7"/>
<circle cx="1130.1" cy="41.6" r="12" fill="#c8203a" stroke="#ececec" stroke-width="1"/>
<path d="M1124.5 41.5L1128.5 45.5L1136 38" stroke="#fff" stroke-width="3" fill="none" stroke-linecap="round" stroke-linejoin="round"/>
<circle cx="1176.6" cy="33" r="19" stroke="#4b4b4b" stroke-width="2.9" fill="#fbfbfb"/>
<path d="M1157.8 33.8H1189.5M1164.9 17.4L1165.3 42" stroke="#4b4b4b" stroke-width="1.4"/>
<path d="M1161 37C1162.5 39 1163.5 24 1166 24.4C1168.5 24.8 1169.5 38.9 1171.8 38.9C1174 38.9 1175 19.7 1177.5 19.7C1180.5 19.7 1181 45.2 1183.3 45.2C1185 45.2 1187 37 1189.5 33.5" stroke="#1e7fc8" stroke-width="2.4" fill="none" stroke-linecap="round"/>
<path d="M1229.5 12.9V33.4L1245.5 23.5Z" fill="#b9c3cb" stroke="#4b4b4b" stroke-width="1.5" stroke-linejoin="round"/>
<path d="M1225.5 16.4H1229.5M1225.5 30.5H1229.5M1245.5 23.5H1250.5M1232.5 19.5H1235.5" stroke="#4b4b4b" stroke-width="1.5"/>
<path d="M1234.2 26.8L1235.6 25.4L1237 26.8L1235.6 28.2Z" fill="#4b4b4b" stroke="#4b4b4b" stroke-width="1"/>
<path d="M1211.7 37.4H1232V49.5H1211.7V45.5Q1214 43.5 1211.7 41.5Z" fill="#bcc8d2" stroke="#4b4b4b" stroke-width="1.3"/>
<rect x="1215.2" y="33.2" width="4.5" height="5.7" fill="#1e7fc8"/><rect x="1215.2" y="47.3" width="4.5" height="6.3" fill="#1e7fc8"/>
<rect x="1222.2" y="33.2" width="4.5" height="5.7" fill="#1e7fc8"/><rect x="1222.2" y="47.3" width="4.5" height="6.3" fill="#1e7fc8"/>
<rect x="1229.3" y="33.2" width="4.5" height="5.7" fill="#1e7fc8"/><rect x="1229.3" y="47.3" width="4.5" height="6.3" fill="#1e7fc8"/>
<circle cx="1241" cy="41.9" r="12" fill="#c8203a" stroke="#ececec" stroke-width="1"/>
<g transform="rotate(45 1241 41.9)"><rect x="1232.3" y="38.6" width="11" height="6.6" rx="3.3" fill="none" stroke="#fff" stroke-width="2.2"/><rect x="1238.7" y="38.6" width="11" height="6.6" rx="3.3" fill="none" stroke="#fff" stroke-width="2.2"/></g>
<rect x="1269" y="13.9" width="37.9" height="37.9" fill="#4b4b4b"/>
<rect x="1275.5" y="20.2" width="8.6" height="6.3" fill="#c6c6c6"/>
<rect x="1285.9" y="20.2" width="8.6" height="6.3" fill="#c6c6c6"/>
<rect x="1296.3" y="20.2" width="8.6" height="6.3" fill="#c6c6c6"/>
<rect x="1271" y="20.2" width="2.6" height="6.3" fill="#b5b5b5"/>
<rect x="1275.5" y="28.1" width="8.6" height="6.3" fill="#fafafa"/>
<rect x="1285.9" y="28.1" width="8.6" height="6.3" fill="#fafafa"/>
<rect x="1296.3" y="28.1" width="8.6" height="6.3" fill="#fafafa"/>
<rect x="1271" y="28.1" width="2.6" height="6.3" fill="#b5b5b5"/>
<rect x="1275.5" y="36.0" width="8.6" height="6.3" fill="#fafafa"/>
<rect x="1285.9" y="36.0" width="8.6" height="6.3" fill="#fafafa"/>
<rect x="1296.3" y="36.0" width="8.6" height="6.3" fill="#fafafa"/>
<rect x="1271" y="36.0" width="2.6" height="6.3" fill="#b5b5b5"/>
<rect x="1275.5" y="43.9" width="8.6" height="6.3" fill="#fafafa"/>
<rect x="1285.9" y="43.9" width="8.6" height="6.3" fill="#fafafa"/>
<rect x="1296.3" y="43.9" width="8.6" height="6.3" fill="#fafafa"/>
<rect x="1271" y="43.9" width="2.6" height="6.3" fill="#b5b5b5"/>
<rect x="1328.4" y="12.3" width="30" height="31" rx="3" fill="#c2c2c2"/>
<rect x="1322.7" y="17.2" width="33.3" height="14.6" fill="#1e7fc8"/>
<text x="1323.3" y="30.3" font-size="15.5" fill="#fff" textLength="31.5" lengthAdjust="spacingAndGlyphs">.bom</text>
<circle cx="1351.9" cy="41.6" r="12" fill="#c8203a" stroke="#ececec" stroke-width="1"/>
<path d="M1351.9 48.5V35.5M1346.5 40.5L1351.9 35.2L1357.3 40.5" stroke="#fff" stroke-width="3" fill="none" stroke-linecap="round" stroke-linejoin="round"/>
<clipPath id="pcb"><rect x="1394.3" y="12.1" width="41.4" height="41.5" rx="5.5"/></clipPath>
<g clip-path="url(#pcb)">
<rect x="1394.3" y="12.1" width="41.4" height="41.5" fill="#0a6e10"/>
<path d="M1420.5 10H1440V20.5H1424L1420.5 17Z" fill="#48a048"/>
<path d="M1417.7 33.8H1440V56H1411V49.5L1417.7 43.2Z" fill="#48a048"/>
<path d="M1405 10V26.5L1412.6 34V41.5L1405 48.5V56" stroke="#48a048" stroke-width="4.4" fill="none" stroke-linejoin="miter"/>
<path d="M1413.8 10V21L1419.8 27.2H1440" stroke="#48a048" stroke-width="3.6" fill="none"/>
<path d="M1392 37.3H1400" stroke="#48a048" stroke-width="4"/>
</g>
<circle cx="1401.7" cy="37.7" r="3.3" fill="#fff8e8" stroke="#e8961e" stroke-width="2.2"/>
<circle cx="1430.7" cy="28" r="3.3" fill="#fff8e8" stroke="#e8961e" stroke-width="2.2"/>
<rect x="-2" y="72.6" width="18.4" height="49.8" fill="#dfeaf8" stroke="#bcd2ee" stroke-width="1"/>
<rect x="-2" y="128.4" width="18.4" height="49.8" fill="#dfeaf8" stroke="#bcd2ee" stroke-width="1"/>
<rect x="-2" y="239.8" width="18.4" height="50.7" fill="#dfeaf8" stroke="#bcd2ee" stroke-width="1"/>
<rect x="-2" y="550.3" width="18.4" height="50.0" fill="#dfeaf8" stroke="#bcd2ee" stroke-width="1"/>
<rect x="-2" y="676.7" width="18.4" height="50.9" fill="#dfeaf8" stroke="#bcd2ee" stroke-width="1"/>
<rect x="-2" y="749.0" width="18.4" height="50.0" fill="#dfeaf8" stroke="#bcd2ee" stroke-width="1"/>
<rect x="-2" y="805.2" width="18.4" height="50.0" fill="#dfeaf8" stroke="#bcd2ee" stroke-width="1"/>
<rect x="1597.5" y="72" width="4" height="51" fill="#d4e4f8" stroke="#b0cbee" stroke-width="1"/>
<path d="M7 78.9L10.4 82.3L7 85.7L3.6 82.3Z" fill="#4b4b4b"/>
<path d="M7 89.4L10.4 92.8L7 96.2L3.6 92.8Z" fill="#4b4b4b"/>
<path d="M7 100.0L10.4 103.4L7 106.8L3.6 103.4Z" fill="#4b4b4b"/>
<path d="M7 110.2L10.4 113.6L7 117.0L3.6 113.6Z" fill="#4b4b4b"/>
<path d="M0 142L11.5 133" stroke="#4b4b4b" stroke-width="1.6"/>
<circle cx="8.7" cy="144.5" r="1.3" fill="#4b4b4b"/><circle cx="3.5" cy="149.5" r="1.3" fill="#4b4b4b"/><circle cx="8.7" cy="149.5" r="1.3" fill="#4b4b4b"/><circle cx="3.5" cy="154.7" r="1.3" fill="#4b4b4b"/><circle cx="8.7" cy="154.7" r="1.3" fill="#4b4b4b"/><circle cx="3.5" cy="160" r="1.3" fill="#4b4b4b"/><circle cx="8.7" cy="160" r="1.3" fill="#4b4b4b"/><circle cx="3.5" cy="165" r="1.3" fill="#4b4b4b"/><circle cx="8.7" cy="165" r="1.3" fill="#4b4b4b"/><circle cx="3.5" cy="170.5" r="1.3" fill="#4b4b4b"/><circle cx="8.7" cy="170.5" r="1.3" fill="#4b4b4b"/>
<path d="M-3 213.5L9.4 217.7L-3 222Z" fill="#4b4b4b"/>
<rect x="2.6" y="251" width="2.4" height="15.5" fill="#4b4b4b"/><path d="M-3 269L9.4 273L-3 278Z" fill="#4b4b4b"/>
<text x="-10.8" y="322.6" font-size="24" font-weight="bold" fill="#4b4b4b">m</text><path d="M-3 325L9.6 329.4L-3 334Z" fill="#4b4b4b"/>
<path d="M0 377.3H12" stroke="#8a8a8a" stroke-width="1"/><circle cx="1" cy="377.3" r="2" fill="#1e7fc8"/><path d="M-3 382.5L6 387L-3 391.5Z" fill="#4b4b4b"/><rect x="-2" y="393" width="4" height="4" fill="#4b4b4b"/>
<rect x="0" y="411.2" width="11" height="1.3" fill="#b8b8b8"/>
<rect x="0" y="483.09999999999997" width="11" height="1.3" fill="#b8b8b8"/>
<rect x="0" y="666.1" width="11" height="1.3" fill="#b8b8b8"/>
<rect x="0" y="737.3" width="11" height="1.3" fill="#b8b8b8"/>
<path d="M-1 443.5L8.5 448L-1 452.5" stroke="#4b4b4b" stroke-width="2.6" fill="none"/><circle cx="9.8" cy="447.8" r="1.8" fill="#4b4b4b"/>
<path d="M0 522L7 515M0 533.4H10" stroke="#4b4b4b" stroke-width="1.4"/><path d="M0 533.4H10" stroke="#4b4b4b" stroke-width="2.8" stroke-linecap="round"/>
<path d="M0 589H10" stroke="#4b4b4b" stroke-width="2.8" stroke-linecap="round"/>
<path d="M0 624L4.5 619" stroke="#4b4b4b" stroke-width="1.6"/><path d="M0 644.6H10" stroke="#4b4b4b" stroke-width="2.8" stroke-linecap="round"/>
<rect x="-10" y="681.9" width="20.5" height="17.2" fill="#4f4f4f"/><text x="-4" y="697.5" font-size="17" font-weight="bold" fill="#fff">?</text>
<rect x="-10" y="706" width="20.5" height="17.3" fill="#1e7fc8"/><text x="-1.5" y="721.5" font-size="17" font-weight="bold" fill="#fff">2</text>
<rect x="-10" y="754.9" width="20.5" height="38" fill="#4b4b4b"/><rect x="-10" y="757.9" width="18.2" height="32.9" fill="#fafafa"/><rect x="-6" y="764.3" width="10.2" height="8.6" fill="none" stroke="#4b4b4b" stroke-width="1.4"/><rect x="-6" y="778.4" width="10.2" height="8.8" fill="none" stroke="#4b4b4b" stroke-width="1.4"/>
<path d="M-2 824L8 814" stroke="#4b4b4b" stroke-width="5.5" stroke-linecap="round"/><path d="M-2 832L5 842" stroke="#1e7fc8" stroke-width="3.6" stroke-linecap="round"/><circle cx="5.6" cy="843.2" r="3.3" fill="#1e7fc8"/><circle cx="5.6" cy="843.2" r="1.3" fill="#dfeaf8"/>
</svg>
</body></html>
